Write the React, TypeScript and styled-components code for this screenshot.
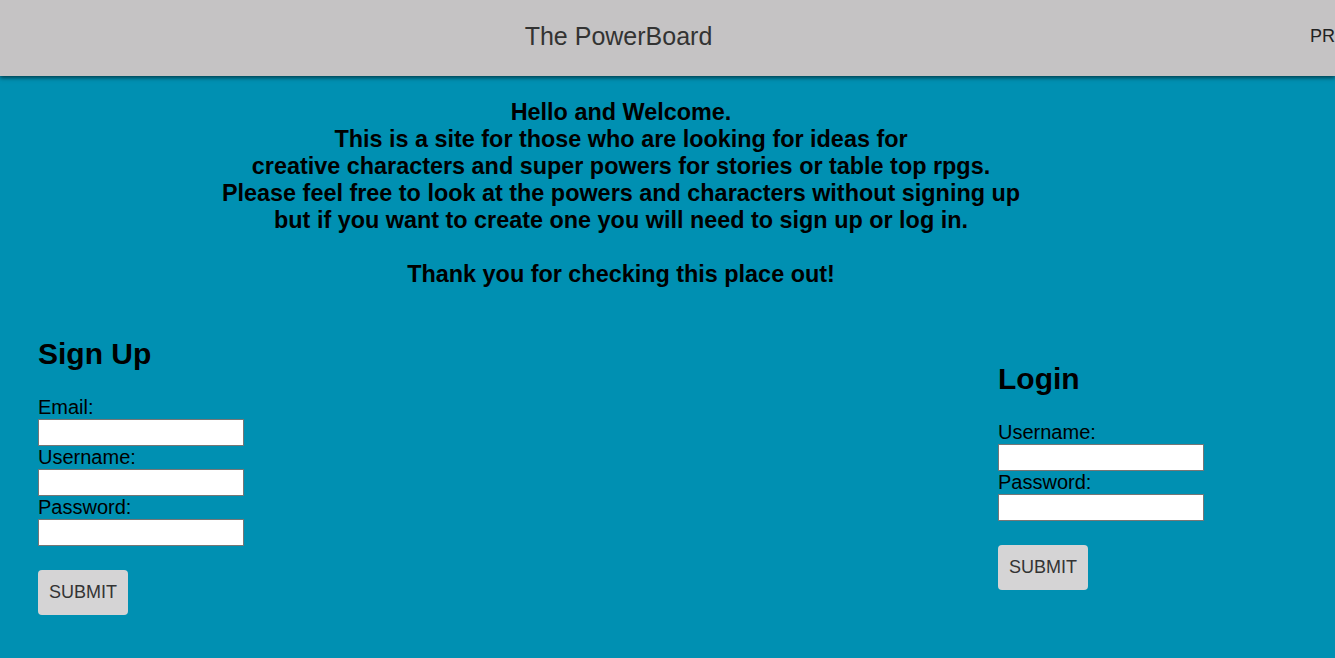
import styled, { createGlobalStyle } from 'styled-components';

const GlobalStyle = createGlobalStyle`
  html, body {
    margin: 0;
    padding: 0;
    overflow-x: hidden;
  }
  body {
    font-family: 'Liberation Sans', Arial, sans-serif;
    font-size: 20px;
    background-color: #0090b2;
    color: #000;
  }
`;

const Page = styled.div`
  min-height: 100vh;
  background-color: #0090b2;
`;

const Header = styled.header`
  box-sizing: border-box;
  display: grid;
  grid-template-columns: 1237px 1fr;
  align-items: center;
  height: 76px;
  padding-bottom: 3px;
  background-color: #c5c3c4;
  box-shadow: 0 2px 4px rgba(0, 0, 0, 0.55);
  white-space: nowrap;
  position: relative;
  z-index: 1;
`;

const SiteTitle = styled.div`
  text-align: center;
  font-size: 25px;
  color: #333;
`;

const NavLink = styled.a`
  padding-left: 73px;
  font-size: 18px;
  color: #222;
  text-decoration: none;
  text-transform: uppercase;
`;

const Welcome = styled.h3`
  width: 1242px;
  margin: 0;
  padding-top: 23px;
  text-align: center;
  font-weight: bold;
  font-size: 23.4px;
  line-height: 27px;
`;

const FormsRow = styled.div`
  display: flex;
  align-items: center;
  justify-content: space-between;
  padding: 49px 38px 0;
`;

const FormColumn = styled.form<{ $width: number }>`
  display: flex;
  flex-direction: column;
  align-items: flex-start;
  width: ${(p) => p.$width}px;
`;

const FormTitle = styled.h2`
  margin: 0 0 25px;
  font-size: 30px;
  line-height: 34px;
  font-weight: bold;
`;

const Label = styled.label`
  display: block;
  font-size: 20px;
  line-height: 23px;
`;

const Input = styled.input`
  box-sizing: border-box;
  width: 206px;
  height: 27px;
  margin: 0;
  border: 1px solid #767676;
  background: #fff;
`;

const SubmitButton = styled.button`
  margin-top: 24px;
  height: 45px;
  padding: 0 11px;
  border: none;
  border-radius: 4px;
  background-color: #d5d4d5;
  color: #333;
  font-family: 'Liberation Sans', Arial, sans-serif;
  font-size: 18px;
  text-transform: uppercase;
`;

function App() {
  return (
    <Page>
      <GlobalStyle />
      <Header>
        <SiteTitle>The PowerBoard</SiteTitle>
        <NavLink href="#">Profile</NavLink>
      </Header>

      <Welcome>
        Hello and Welcome.
        <br />
        This is a site for those who are looking for ideas for
        <br />
        creative characters and super powers for stories or table top rpgs.
        <br />
        Please feel free to look at the powers and characters without signing up
        <br />
        but if you want to create one you will need to sign up or log in.
        <br />
        <br />
        Thank you for checking this place out!
      </Welcome>

      <FormsRow>
        <FormColumn $width={300}>
          <FormTitle>Sign Up</FormTitle>
          <Label>Email:</Label>
          <Input type="email" />
          <Label>Username:</Label>
          <Input type="text" />
          <Label>Password:</Label>
          <Input type="password" />
          <SubmitButton type="button">Submit</SubmitButton>
        </FormColumn>
        <FormColumn $width={299}>
          <FormTitle>Login</FormTitle>
          <Label>Username:</Label>
          <Input type="text" />
          <Label>Password:</Label>
          <Input type="password" />
          <SubmitButton type="button">Submit</SubmitButton>
        </FormColumn>
      </FormsRow>
    </Page>
  );
}

export default App;
